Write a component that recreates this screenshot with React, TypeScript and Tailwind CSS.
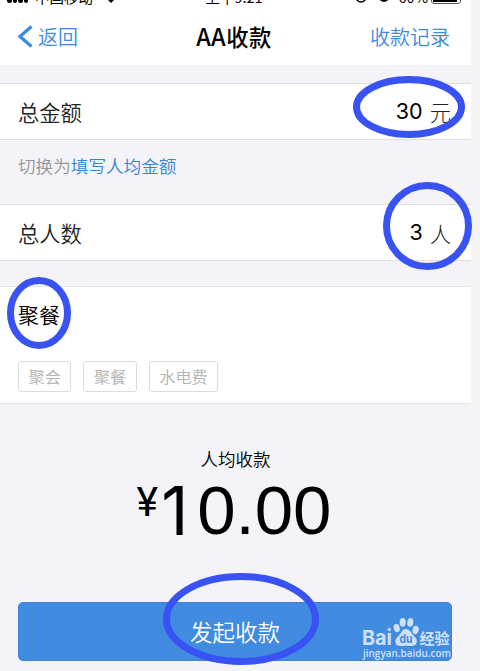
import type { ReactNode } from "react";

const tags = ["聚会", "聚餐", "水电费"];

const highlights = [
  { cx: 409, cy: 107, rx: 52.5, ry: 27.5 },
  { cx: 427.5, cy: 226, rx: 41, ry: 40.5 },
  { cx: 39, cy: 313, rx: 28.5, ry: 32.5 },
  { cx: 241, cy: 619, rx: 74.5, ry: 42.5 },
];

function StatusBar() {
  return (
    <div className="flex h-[5px] items-end justify-between overflow-hidden pr-[10px] pl-[7px] text-[14.5px] leading-[17px] text-black">
      <div className="flex w-[190px] items-end">
        <div className="flex gap-[1px] pb-[2px]">
          <span className="h-4 w-[4.5px] rounded-b-full bg-black" />
          <span className="h-4 w-[4.5px] rounded-b-full bg-black" />
          <span className="h-4 w-[4.5px] rounded-b-full bg-black" />
          <span className="h-4 w-[4.5px] rounded-b-full bg-black" />
        </div>
        <span className="ml-[7px]">中国移动</span>
        <svg className="mb-[2px] ml-[10px] h-3 w-4" viewBox="0 0 16 12">
          <path d="M0 4Q8-3 16 4L8 12Z" />
        </svg>
      </div>
      <span>上午9:21</span>
      <div className="flex w-[190px] items-end justify-end">
        <svg className="mr-[12px] mb-[2px] h-3 w-3" viewBox="0 0 12 12">
          <circle cx="6" cy="6" r="5" fill="none" stroke="black" strokeWidth="1.5" />
        </svg>
        <svg className="mr-[10px] mb-[3px] h-[10px] w-[10px]" viewBox="0 0 10 10">
          <circle cx="5" cy="5" r="5" />
        </svg>
        <span>60%</span>
        <div className="mb-[1px] ml-[3px] h-3 w-[30px] shrink-0 rounded-[3px] border border-[#555] p-[1px]">
          <div className="h-full w-[24px] bg-black" />
        </div>
      </div>
    </div>
  );
}

function Row({ label, value, unit }: { label: string; value: string; unit: string }) {
  return (
    <div className="flex h-[57px] items-center justify-between border-y border-[#dedee3] bg-white pr-5 pl-[18px] text-[21.3px] font-[350] text-[#222]">
      <span>{label}</span>
      <span className="flex items-center">
        <span className="font-['Inter'] text-[21.5px] font-normal text-black">{value}</span>
        <span className="ml-[7px] font-light">{unit}</span>
      </span>
    </div>
  );
}

function Tag({ children }: { children: ReactNode }) {
  return (
    <button
      type="button"
      className="h-[31px] rounded-[3px] border border-[#dcdcdc] px-[9.5px] text-[16.2px] leading-[29px] font-[350] text-[#b2b2b2]"
    >
      {children}
    </button>
  );
}

function Watermark() {
  return (
    <div className="absolute top-[615px] left-[362px] w-[92px] text-[#cfe1f7]">
      <svg className="block h-[32px] w-[90px]" viewBox="0 0 90 32" fill="currentColor">
        <text x="0" y="29.500" fontSize="20.500" fontWeight="700" fontFamily="Inter, sans-serif" textLength="30" lengthAdjust="spacingAndGlyphs">
          Bai
        </text>
        <ellipse cx="34.700" cy="13" rx="3" ry="4.200" transform="rotate(-12 34.700 13)" />
        <ellipse cx="40.700" cy="7.300" rx="3" ry="4.400" />
        <ellipse cx="48.300" cy="7.300" rx="3" ry="4.400" transform="rotate(8 48.300 7.300)" />
        <ellipse cx="53.600" cy="15" rx="3" ry="4.200" transform="rotate(14 53.600 15)" />
        <path d="M44 14c4 0 5 4 7.500 6.500 2 2 4 4 3.200 7-1 4-5 4-10.700 3-5.500 1-9.700 1-10.500-3-.600-3 1.500-5 3.500-7 3-3 3-6.500 7-6.500Z" />
        <text x="37.500" y="28" fontSize="12" fontWeight="700" fontFamily="Inter, sans-serif" fill="#428ce2" textLength="13" lengthAdjust="spacingAndGlyphs">
          du
        </text>
        <text x="57.500" y="28.500" fontSize="15" fontWeight="700" fontFamily="Noto Sans CJK SC, sans-serif">
          经验
        </text>
      </svg>
      <svg className="block h-[14px] w-[92px]" viewBox="0 0 92 14" fill="currentColor">
        <text x="1" y="9.500" fontSize="10.500" fontWeight="600" fontFamily="Open Sans, sans-serif" textLength="88" lengthAdjust="spacingAndGlyphs">
          jingyan.baidu.com
        </text>
      </svg>
    </div>
  );
}

export default function App() {
  return (
    <div className="relative h-[671px] w-[480px] overflow-hidden bg-[#f5f5f6] font-['Noto_Sans_CJK_SC',sans-serif]">
      <div className="flex h-full w-[471px] flex-col bg-[#f3f3f8]">
        <header className="h-[65px] shrink-0 bg-white">
          <StatusBar />
          <nav className="flex h-[60px] items-center justify-between pt-[3px] pr-[21px] pl-[18px] text-[20px] font-[350] text-[#3d8bdc]">
            <button type="button" className="flex w-[100px] items-center">
              <svg className="mr-[5px] h-[23px] w-[15px]" viewBox="0 0 15 23" fill="none" stroke="currentColor" strokeWidth="3.200">
                <path d="M13.500 1.500 2 11.500l11.500 10" />
              </svg>
              <span>返回</span>
            </button>
            <h1 className="text-[22.300px] font-medium tracking-[0.5px] text-black">
              <span className="text-[23.5px]">AA</span>收款
            </h1>
            <button type="button" className="w-[100px] text-right whitespace-nowrap">
              收款记录
            </button>
          </nav>
        </header>

        <main className="flex flex-col pt-[18px]">
          <Row label="总金额" value="30" unit="元" />
          <p className="h-[64px] pl-[18px] text-[17.600px] leading-[52px] font-[350] text-[#96969b]">
            切换为<span className="text-[#3484d8]">填写人均金额</span>
          </p>
          <Row label="总人数" value="3" unit="人" />

          <section className="mt-[25px] h-[118px] border-y border-[#e5e5e8] bg-white pl-[18px]">
            <p className="pt-[11px] text-[21px] leading-[32px] font-[350] text-black">聚餐</p>
            <div className="mt-[31px] flex gap-[12px]">
              {tags.map((tag) => (
                <Tag key={tag}>{tag}</Tag>
              ))}
            </div>
          </section>

          <section className="flex h-[145px] flex-col items-center pt-[42px] text-black">
            <p className="text-[17.500px] leading-[26px] font-[350]">人均收款</p>
            <p className="flex items-start pr-[3px]">
              <span className="pt-[9px] font-['Roboto'] text-[41px] leading-[42px]">¥</span>
              <span className="ml-[3px] flex text-[69px] leading-[78px]">
                <span className="w-[36px] font-['Inter'] text-[67px]">1</span>
                <span className="font-['Liberation_Sans']">0.00</span>
              </span>
            </p>
          </section>

          <button
            type="button"
            className="mx-[18px] mt-[53px] h-[59px] w-[434px] rounded-[5px] border border-[#3d84d6] bg-[#418be1] text-[22.500px] leading-[55px] font-[350] text-white"
          >
            发起收款
          </button>
        </main>
      </div>

      <Watermark />

      <svg className="pointer-events-none absolute inset-0" width="480" height="671" fill="none" stroke="#3852f4" strokeWidth="7">
        {highlights.map((mark) => (
          <ellipse key={mark.cy} {...mark} />
        ))}
      </svg>
    </div>
  );
}
